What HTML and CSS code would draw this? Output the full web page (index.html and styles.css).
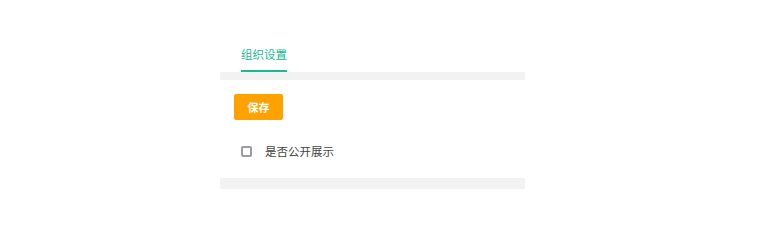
FILE: index.html
```html
<!DOCTYPE html>
<html lang="zh-CN">
<head>
<meta charset="utf-8">
<title>组织设置</title>
<link rel="stylesheet" href="styles.css">
</head>
<body>
<div class="panel">
  <div class="tabs">
    <div class="tab active">组织设置</div>
  </div>
  <div class="band band-top"></div>
  <div class="content">
    <button class="btn-save" type="button">保存</button>
    <label class="check-row">
      <span class="checkbox"></span>
      <span class="check-label">是否公开展示</span>
    </label>
  </div>
  <div class="band band-bottom"></div>
</div>
</body>
</html>
```
FILE: styles.css
```css
html, body {
  margin: 0;
  padding: 0;
  background: #ffffff;
}
body {
  font-family: "Noto Sans CJK SC", "Noto Sans", sans-serif;
  font-size: 12px;
  color: #333333;
}
.panel {
  margin-left: 220px;
  width: 305px;
}
.tabs {
  display: flex;
  padding-top: 44px;
  padding-left: 21px;
}
.tab {
  font-size: 11.5px;
  line-height: 20px;
  padding-bottom: 6px;
  border-bottom: 2px solid transparent;
  color: #333333;
}
.tab.active {
  color: #1db895;
  border-bottom-color: #1db895;
}
.band {
  background: #f2f2f2;
}
.band-top {
  height: 8px;
}
.band-bottom {
  height: 11px;
}
.content {
  display: flex;
  flex-direction: column;
  align-items: flex-start;
  padding: 14px 14px 17px 14px;
}
.btn-save {
  width: 49px;
  height: 26px;
  border: none;
  border-radius: 2px;
  background: #ffa200;
  color: #ffffff;
  font-family: inherit;
  font-size: 11px;
  font-weight: bold;
  padding: 0;
  cursor: pointer;
}
.check-row {
  display: flex;
  align-items: center;
  margin-top: 21px;
  margin-left: 7px;
  line-height: 20px;
  height: 20px;
}
.checkbox {
  box-sizing: border-box;
  width: 11px;
  height: 11px;
  border: 2px solid #9a9aa0;
  border-radius: 2px;
  background: #ffffff;
}
.check-label {
  margin-left: 13px;
  font-size: 11.5px;
  color: #444444;
}
```
